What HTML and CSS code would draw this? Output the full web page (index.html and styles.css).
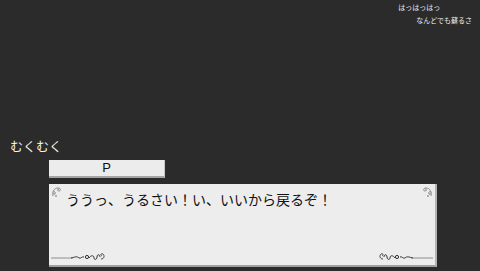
FILE: index.html
```html
<!DOCTYPE html>
<html lang="ja">
<head>
  <meta charset="UTF-8" />
  <title>Message</title>
  <link rel="stylesheet" href="styles.css">
</head>
<body>
  <div class="screen">
    <div class="notes">
      <div class="note">はっはっはっ</div>
      <div class="note second">なんどでも蘇るさ</div>
    </div>

    <div class="stage">
      <div class="speaker">むくむく</div>
      <div class="namebox">P</div>
      <div class="dialog">
        <svg class="orn tl" width="12" height="12" viewBox="0 0 12 12">
          <path d="M2 10 C1 6 3 2 7 2 C10 2 10 5 8 5 C6 5 6 3 8 3" fill="none" stroke="#8a8a8a" stroke-width="1"/>
          <path d="M2 6 C3 5 5 6 4 8 C3 9 2 8 3 7" fill="none" stroke="#8a8a8a" stroke-width="1"/>
          <circle cx="5" cy="10" r="1" fill="#9a9a9a"/>
        </svg>
        <svg class="orn tr" width="12" height="12" viewBox="0 0 12 12">
          <path d="M10 10 C11 6 9 2 5 2 C2 2 2 5 4 5 C6 5 6 3 4 3" fill="none" stroke="#8a8a8a" stroke-width="1"/>
          <path d="M10 6 C9 5 7 6 8 8 C9 9 10 8 9 7" fill="none" stroke="#8a8a8a" stroke-width="1"/>
          <circle cx="7" cy="10" r="1" fill="#9a9a9a"/>
        </svg>
        <svg class="orn bl" width="56" height="10" viewBox="0 0 56 10">
          <path d="M0 7 L22 7" stroke="#777" stroke-width="0.8"/>
          <path d="M20 7 C24 6 26 5 28 7 C30 8 31 5 33 6" fill="none" stroke="#333" stroke-width="1"/>
          <circle cx="36" cy="6" r="1.6" fill="none" stroke="#333" stroke-width="1"/>
          <path d="M38 7 C40 4 43 4 43 7 C43 9 46 9 46 6 C46 3 49 3 49 6" fill="none" stroke="#333" stroke-width="1"/>
          <path d="M50 8 C53 8 54 5 52 3 C50 2 49 4 51 5" fill="none" stroke="#444" stroke-width="1"/>
        </svg>
        <svg class="orn br" width="56" height="10" viewBox="0 0 56 10">
          <path d="M56 7 L34 7" stroke="#777" stroke-width="0.8"/>
          <path d="M36 7 C32 6 30 5 28 7 C26 8 25 5 23 6" fill="none" stroke="#333" stroke-width="1"/>
          <circle cx="20" cy="6" r="1.6" fill="none" stroke="#333" stroke-width="1"/>
          <path d="M18 7 C16 4 13 4 13 7 C13 9 10 9 10 6 C10 3 7 3 7 6" fill="none" stroke="#333" stroke-width="1"/>
          <path d="M6 8 C3 8 2 5 4 3 C6 2 7 4 5 5" fill="none" stroke="#444" stroke-width="1"/>
        </svg>
        <p class="line">ううっ、うるさい！い、いいから戻るぞ！</p>
      </div>
    </div>
  </div>
</body>
</html>
```

FILE: styles.css
```css
* {
  box-sizing: border-box;
}

body {
  margin: 0;
  background: #2b2b2b;
  font-family: "Noto Sans CJK JP", "Noto Sans", sans-serif;
  color: #fff;
}

.screen {
  width: 480px;
  height: 271px;
  display: flex;
  flex-direction: column;
}

.notes {
  align-self: flex-end;
  margin: 1px 8px 0 0;
  font-size: 7px;
  line-height: 13px;
  color: #e8e8e8;
}

.note.second {
  margin-left: 18px;
}

.stage {
  margin-top: auto;
  padding-bottom: 4px;
}

.speaker {
  padding-left: 10px;
  font-size: 13px;
  line-height: 16px;
  color: #f4f4f4;
}

.namebox {
  width: 116px;
  height: 18px;
  margin: 6px 0 0 49px;
  background: #ececec;
  border-bottom: 2px solid #a5a5a5;
  border-right: 1px solid #c8c8c8;
  color: #111;
  font-family: "Liberation Sans", sans-serif;
  font-size: 13px;
  line-height: 16px;
  text-align: center;
}

.dialog {
  position: relative;
  width: 388px;
  height: 83px;
  margin: 6px 0 0 49px;
  background: #ededed;
  border-bottom: 2px solid #a0a0a0;
  border-right: 2px solid #b4b4b4;
  padding: 7px 0 0 17px;
}

.line {
  margin: 0;
  color: #111;
  font-size: 14px;
  line-height: 16px;
}

.orn {
  position: absolute;
}

.orn.tl {
  left: 2px;
  top: 2px;
}

.orn.tr {
  right: 2px;
  top: 2px;
}

.orn.bl {
  left: 2px;
  bottom: 4px;
}

.orn.br {
  right: 2px;
  bottom: 4px;
}
```
